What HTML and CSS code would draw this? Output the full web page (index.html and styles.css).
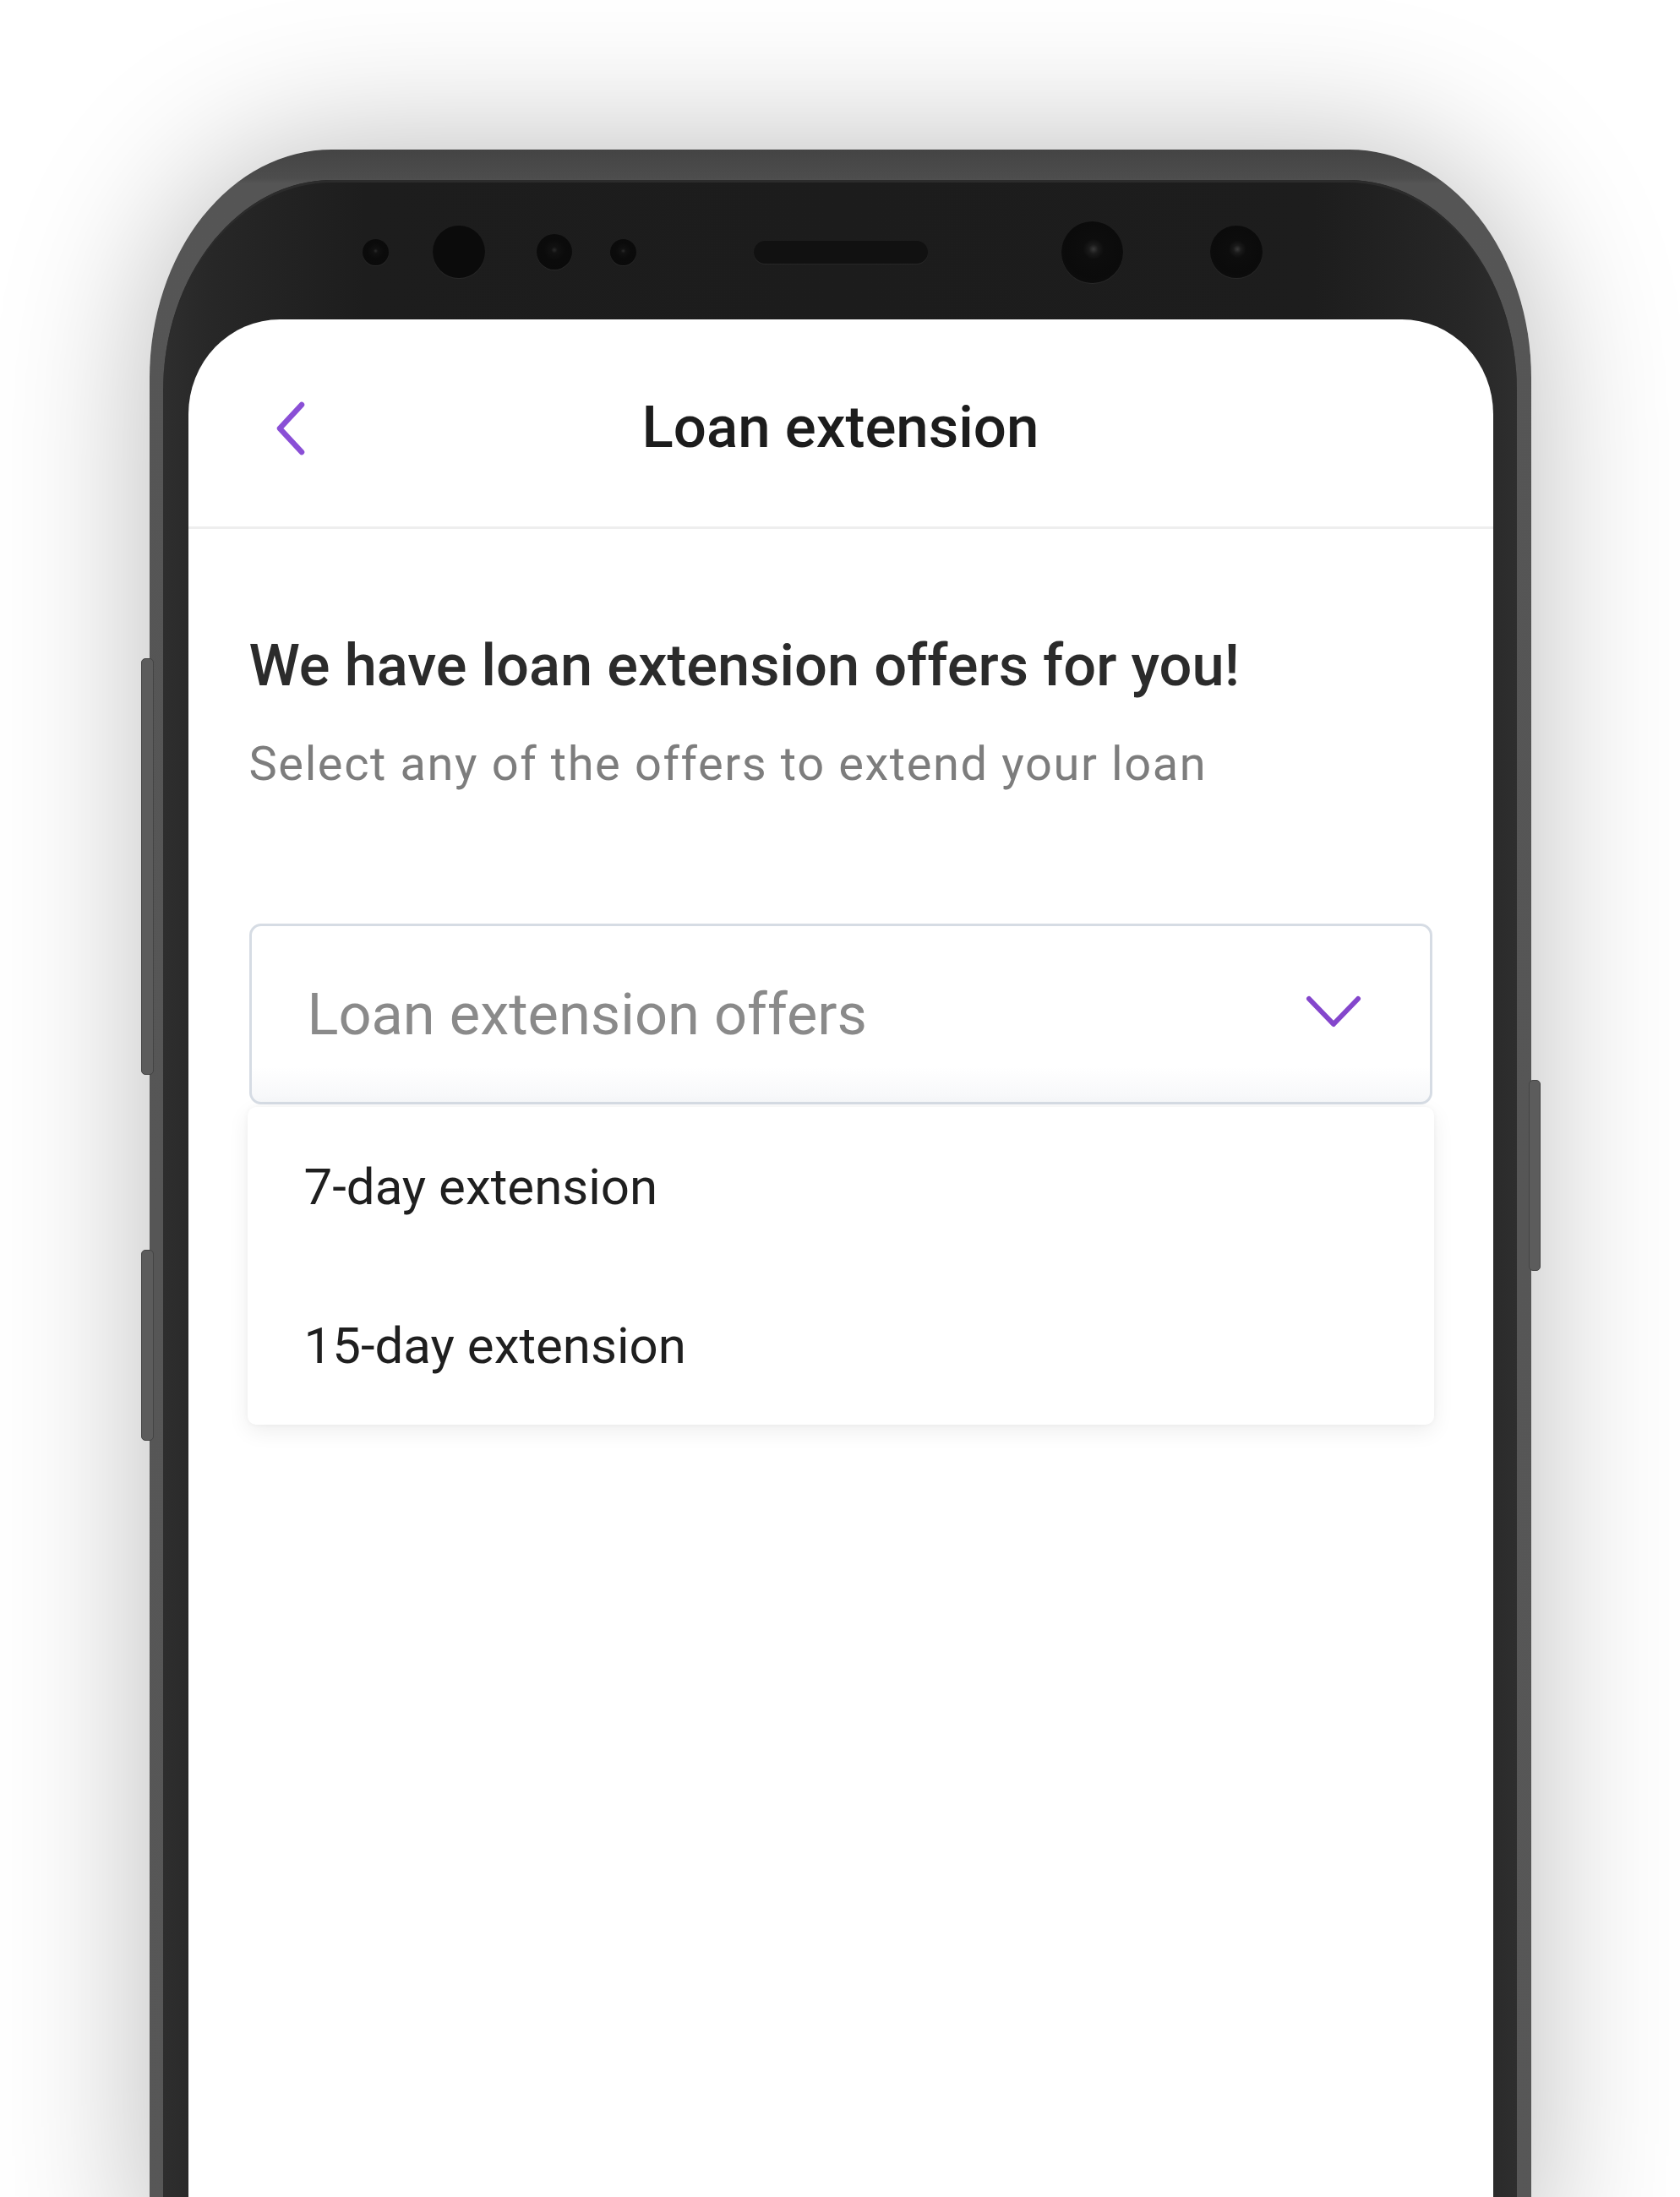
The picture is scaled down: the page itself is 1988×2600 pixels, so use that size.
FILE: index.html
```html
<!DOCTYPE html>
<html lang="en">
<head>
<meta charset="utf-8">
<title>Loan extension</title>
<link rel="stylesheet" href="styles.css">
</head>
<body>
<div class="stage">
  <div class="phone">
    <span class="btn btn-l1"></span>
    <span class="btn btn-l2"></span>
    <span class="btn btn-r1"></span>
    <div class="bezel">
      <div class="sensors">
        <span class="hole dot1"></span>
        <span class="hole cam1"></span>
        <span class="hole dot3"></span>
        <span class="hole dot4"></span>
        <span class="speaker"></span>
        <span class="hole cam2 lens"></span>
        <span class="hole cam3 lens"></span>
      </div>
      <div class="screen">
        <header class="appbar">
          <div class="back">
            <svg class="back-icon" width="40" height="64" viewBox="0 0 40 64" aria-hidden="true">
              <path d="M33 4 L7 32 L33 60" fill="none" stroke="#8a4fd6" stroke-width="6.5" stroke-linecap="round" stroke-linejoin="round"/>
            </svg>
          </div>
          <h1 class="title">Loan extension</h1>
          <div></div>
        </header>
        <main class="content">
          <h2 class="heading">We have loan extension offers for you!</h2>
          <p class="sub">Select any of the offers to extend your loan</p>
          <div class="select">
            <span class="placeholder">Loan extension offers</span>
            <svg class="chev" width="68" height="42" viewBox="0 0 68 42" aria-hidden="true">
              <path d="M5 5 L34 35 L63 5" fill="none" stroke="#8446cc" stroke-width="6" stroke-linecap="round" stroke-linejoin="round"/>
            </svg>
          </div>
          <ul class="menu">
            <li class="item">7-day extension</li>
            <li class="item">15-day extension</li>
          </ul>
        </main>
      </div>
    </div>
  </div>
</div>
</body>
</html>
```
FILE: styles.css
```css
html, body {
  margin: 0;
  padding: 0;
  background: #ffffff;
  height: 2600px;
  overflow: hidden;
  font-family: Roboto, "Noto Sans", "Liberation Sans", sans-serif;
}

.stage {
  display: flex;
  justify-content: center;
  padding-top: 177px;
}

.phone {
  position: relative;
  box-sizing: border-box;
  width: 1635px;
  height: 2500px;
  padding: 36px 17px 0 16px;
  background: linear-gradient(to bottom, #444 0, #4d4d4d 34px, #555 40px, #575757 100%);
  border-radius: 215px 215px 0 0 / 270px 270px 0 0;
  box-shadow: 0 0 180px rgba(0, 0, 0, 0.28);
  display: flex;
}

.btn {
  position: absolute;
  background: #5c5c5c;
  border: 1px solid #444;
  border-radius: 5px;
  box-sizing: border-box;
}
.btn-l1 { left: -10px; top: 602px; width: 15px; height: 493px; }
.btn-l2 { left: -10px; top: 1302px; width: 15px; height: 226px; }
.btn-r1 { right: -11px; top: 1101px; width: 14px; height: 226px; }

.bezel {
  flex: 1;
  display: flex;
  flex-direction: column;
  box-sizing: border-box;
  padding: 0 28px 0 30px;
  background: linear-gradient(to right, #2e2e2e 0, #272727 60px, #1d1d1d 240px, #1c1c1c 50%, #1d1d1d calc(100% - 240px), #272727 calc(100% - 60px), #2e2e2e 100%);
  border-radius: 200px 200px 0 0 / 250px 250px 0 0;
  box-shadow: inset 0 3px 0 #2c2c2c;
}

.sensors {
  height: 165px;
  box-sizing: border-box;
  padding-top: 5px;
  display: flex;
  align-items: center;
}

.hole {
  display: block;
  flex: none;
  border-radius: 50%;
  background: radial-gradient(circle at 50% 45%, #2a2a2a 0, #111 12%, #0b0b0b 40%, #0a0a0a 100%);
  box-shadow: 0 1px 1px rgba(255, 255, 255, 0.06);
}
.dot1 { width: 31px; height: 31px; margin-left: 206px; }
.cam1 { width: 62px; height: 62px; margin-left: 52px; background: #0b0b0b; }
.dot3 { width: 42px; height: 42px; margin-left: 61px; }
.dot4 { width: 31px; height: 31px; margin-left: 45px; }
.speaker {
  display: block;
  flex: none;
  width: 206px;
  height: 27px;
  margin-left: 139px;
  border-radius: 14px;
  background: #111;
  box-shadow: 0 1px 1px rgba(255, 255, 255, 0.06);
}
.cam2 { width: 73px; height: 73px; margin-left: 158px; }
.cam3 { width: 62px; height: 62px; margin-left: 103px; }
.lens {
  background: radial-gradient(circle at 52% 45%, #3a3a3a 0, #1a1a1a 10%, #0d0d0d 22%, #0b0b0b 60%, #101010 100%);
}

.screen {
  flex: 1;
  background: #ffffff;
  border-radius: 108px 108px 0 0 / 112px 112px 0 0;
  display: flex;
  flex-direction: column;
}

.appbar {
  height: 245px;
  border-bottom: 3px solid #eeeeee;
  display: grid;
  grid-template-columns: 1fr auto 1fr;
  align-items: center;
}

.back {
  padding-left: 101px;
  padding-top: 12px;
  display: flex;
}

.title {
  margin: 0;
  font-size: 69px;
  font-weight: 500;
  color: #1c1c1c;
  line-height: 1;
  padding-top: 9px;
}

.content {
  padding: 0 72px;
}

.heading {
  margin: 120px 0 0;
  font-size: 68.6px;
  line-height: 84px;
  font-weight: 500;
  color: #2b2b2b;
}

.sub {
  margin: 41px 0 0;
  font-size: 56px;
  line-height: 67px;
  font-weight: 400;
  letter-spacing: 1.6px;
  color: #7d7d7d;
}

.select {
  margin-top: 155px;
  height: 214px;
  box-sizing: border-box;
  border: 3px solid #d6dce4;
  border-radius: 14px;
  background: linear-gradient(to bottom, #ffffff 0, #ffffff 80%, #f6f7f9 100%);
  display: flex;
  align-items: center;
  justify-content: space-between;
  padding: 0 80px 0 66px;
}

.placeholder {
  font-size: 68.6px;
  color: #8a8a8a;
  font-weight: 400;
}

.chev {
  display: block;
  margin-top: -4px;
}

.menu {
  list-style: none;
  margin: 3px -2px 0;
  padding: 0;
  background: #ffffff;
  border-radius: 10px;
  box-shadow: 0 8px 26px rgba(0, 0, 0, 0.07), 0 0 6px rgba(0, 0, 0, 0.04);
}

.item {
  height: 188px;
  display: flex;
  align-items: center;
  padding-left: 67px;
  font-size: 60px;
  color: #1f1f1f;
}
```
